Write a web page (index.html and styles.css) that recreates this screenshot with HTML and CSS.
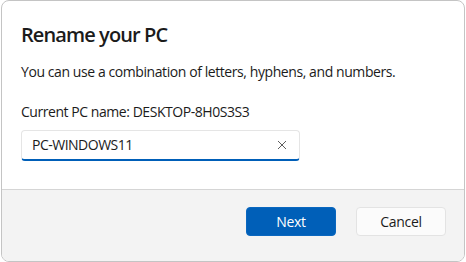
FILE: index.html
```html
<!DOCTYPE html>
<html>
<head>
<meta charset="utf-8">
<link rel="stylesheet" href="styles.css">
</head>
<body>
<div class="dialog">
  <div class="content">
    <h1 class="title">Rename your PC</h1>
    <p class="text">You can use a combination of letters, hyphens, and numbers.</p>
    <p class="text current">Current PC name: DESKTOP-8H0S3S3</p>
    <div class="input">
      <span class="value">PC-WINDOWS11</span>
      <svg class="clear" width="10" height="10" viewBox="0 0 10 10"><path d="M1 1L9 9M9 1L1 9" stroke="#5f5f5f" stroke-width="1" fill="none"/></svg>
    </div>
  </div>
  <div class="footer">
    <button class="btn primary">Next</button>
    <button class="btn secondary">Cancel</button>
  </div>
</div>
</body>
</html>
```
FILE: styles.css
```css
* { box-sizing: border-box; }
html, body { margin: 0; padding: 0; background: #ffffff; }
body { font-family: "Open Sans", "Noto Sans", sans-serif; color: #1b1b1b; }
.dialog {
  margin-left: 1px;
  width: 464px;
  height: 262px;
  border: 1px solid #c4c4c4;
  border-radius: 8px;
  overflow: hidden;
  display: flex;
  flex-direction: column;
  background: #ffffff;
}
.content {
  padding: 20px 20px 0 19px;
  height: 188px;
}
.title {
  margin: 0;
  font-size: 20px;
  line-height: 28px;
  font-weight: 600;
  letter-spacing: -0.9px;
}
.text {
  margin: 13px 0 0 0;
  font-size: 14px;
  line-height: 20px;
  letter-spacing: -0.42px;
}
.current { margin-top: 20px; letter-spacing: -0.45px; }
.input {
  margin-top: 8px;
  width: 279px;
  height: 31px;
  border: 1px solid #e5e5e5;
  border-bottom: 2px solid #005fb8;
  border-radius: 4px;
  display: flex;
  align-items: center;
  justify-content: space-between;
  padding: 0 12px 0 10px;
}
.value { font-size: 14px; line-height: 20px; letter-spacing: -0.5px; }
.clear { display: block; }
.footer {
  flex: 1;
  background: #f3f3f3;
  border-top: 1px solid #d5d5d5;
  display: flex;
  justify-content: flex-end;
  align-items: flex-start;
  gap: 20px;
  padding: 17px 18px 0 0;
}
.btn {
  width: 90px;
  height: 29px;
  border-radius: 4px;
  font-family: inherit;
  font-size: 14px;
  line-height: 20px;
  padding: 0;
  letter-spacing: -0.3px;
}
.primary {
  background: #005fb8;
  color: #ffffff;
  border: 1px solid #0a67bf;
}
.secondary {
  background: #fbfbfb;
  color: #1b1b1b;
  border: 1px solid #e3e3e3;
}
```
